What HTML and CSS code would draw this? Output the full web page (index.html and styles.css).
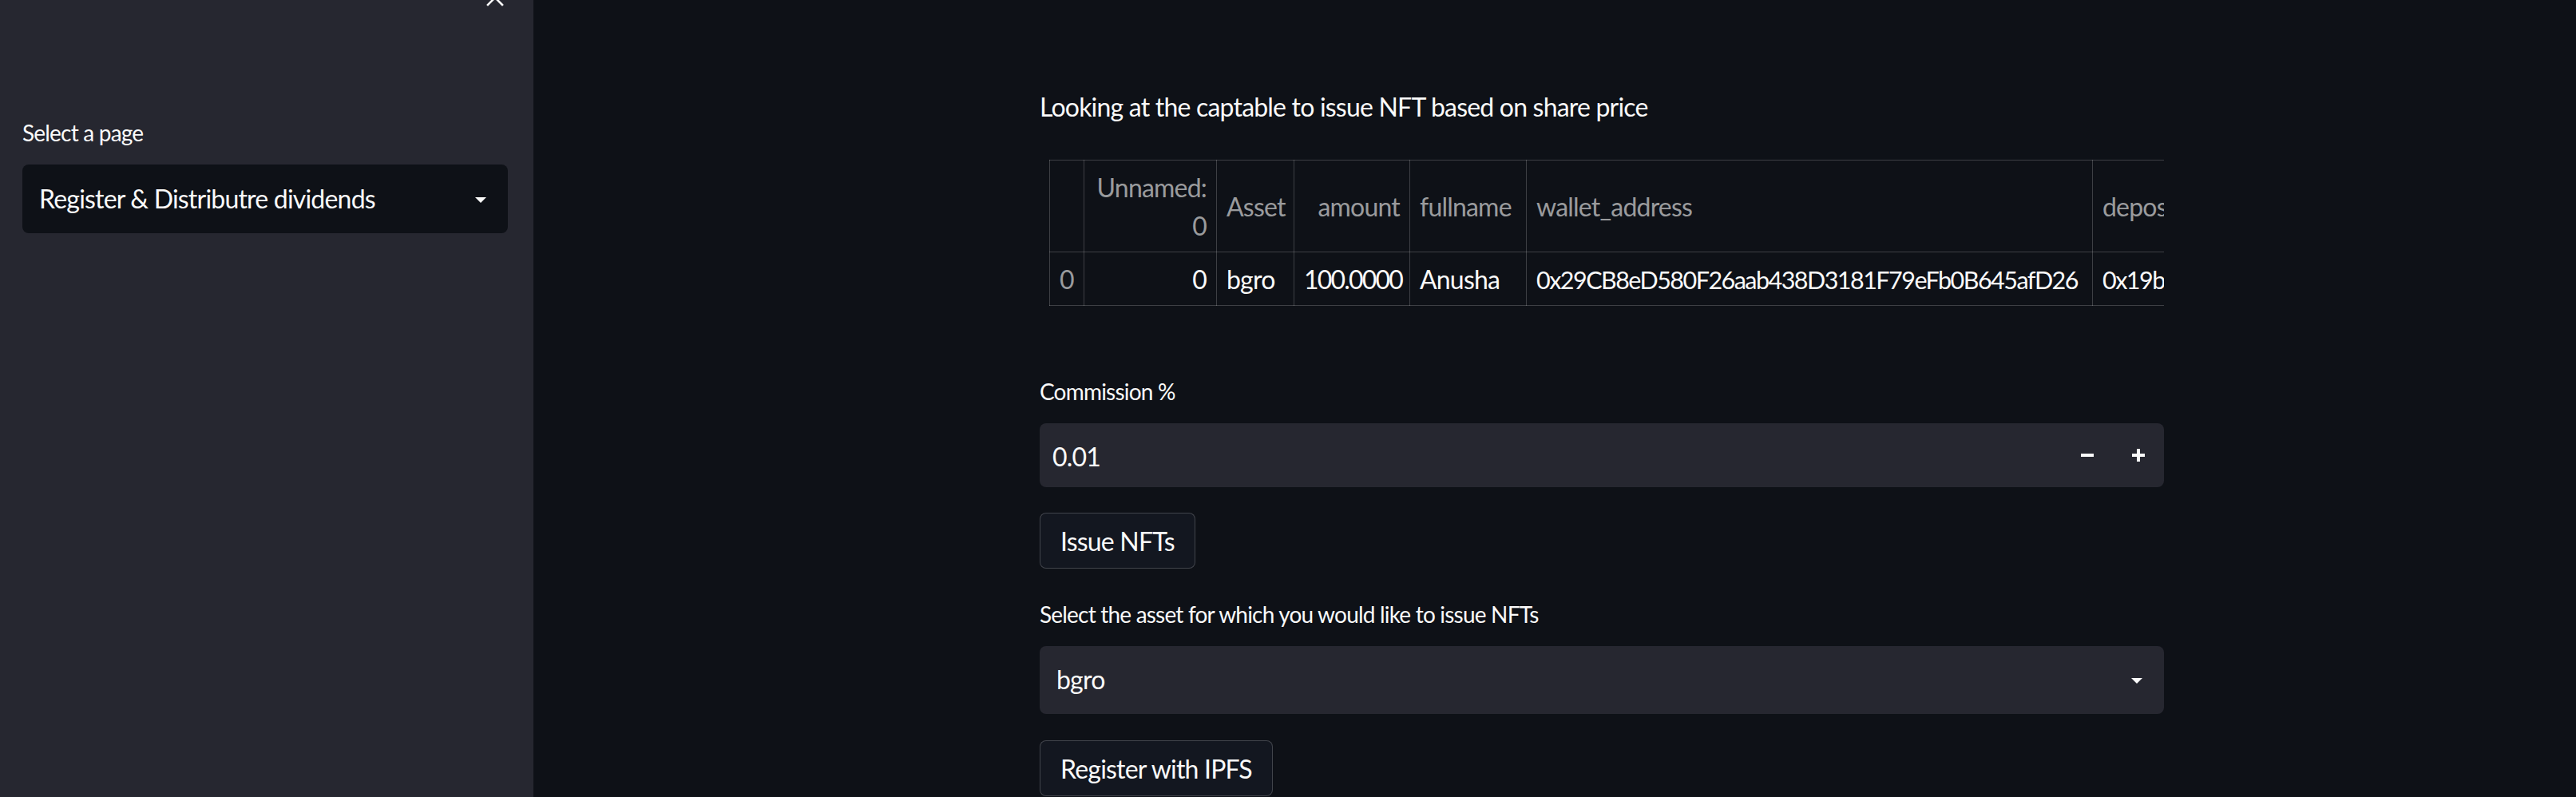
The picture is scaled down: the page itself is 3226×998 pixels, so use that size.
FILE: index.html
```html
<!DOCTYPE html>
<html lang="en">
<head>
<meta charset="utf-8">
<title>Register &amp; Distributre dividends</title>
<link rel="stylesheet" href="styles.css">
</head>
<body>
<div class="app">
  <aside class="sidebar">
    <div class="sidebar-header">
      <button class="close-btn" aria-label="Close sidebar">
        <svg width="24" height="24" viewBox="0 0 24 24"><path d="M3 3 L21 21 M21 3 L3 21" stroke="#fafafa" stroke-width="2.6" stroke-linecap="square" fill="none"/></svg>
      </button>
    </div>
    <div class="field sidebar-field">
      <div class="label">Select a page</div>
      <div class="select select-dark">
        <span class="select-value">Register &amp; Distributre dividends</span>
        <span class="caret"></span>
      </div>
    </div>
  </aside>
  <main class="main">
    <div class="block">
      <p class="heading">Looking at the captable to issue NFT based on share price</p>
      <div class="table-wrap">
        <table class="df">
          <colgroup>
            <col class="c-idx"><col class="c-unnamed"><col class="c-asset"><col class="c-amount"><col class="c-name"><col class="c-wallet"><col class="c-dep">
          </colgroup>
          <thead>
            <tr>
              <th></th>
              <th class="num">Unnamed:<br>0</th>
              <th>Asset</th>
              <th class="num">amount</th>
              <th>fullname</th>
              <th>wallet_address</th>
              <th>deposit_address</th>
            </tr>
          </thead>
          <tbody>
            <tr>
              <th class="idx">0</th>
              <td class="num">0</td>
              <td>bgro</td>
              <td class="num tight">100.0000</td>
              <td>Anusha</td>
              <td class="addr">0x29CB8eD580F26aab438D3181F79eFb0B645afD26</td>
              <td class="addr">0x19b4C2d7aE58F1b0a3C6e2D7F41A9c05bE3dA81F</td>
            </tr>
          </tbody>
        </table>
      </div>

      <div class="field field-commission">
        <div class="label">Commission %</div>
        <div class="number-input">
          <span class="number-value">0.01</span>
          <div class="steps">
            <button class="step" aria-label="Decrement"><svg width="16" height="16" viewBox="0 0 16 16"><rect x="0" y="6" width="16" height="4" fill="#fafafa"/></svg></button>
            <button class="step" aria-label="Increment"><svg width="16" height="16" viewBox="0 0 16 16"><rect x="0" y="6" width="16" height="4" fill="#fafafa"/><rect x="6" y="0" width="4" height="16" fill="#fafafa"/></svg></button>
          </div>
        </div>
      </div>

      <button class="btn btn-first">Issue NFTs</button>

      <div class="field field-asset">
        <div class="label">Select the asset for which you would like to issue NFTs</div>
        <div class="select">
          <span class="select-value">bgro</span>
          <span class="caret"></span>
        </div>
      </div>

      <button class="btn btn-second">Register with IPFS</button>
    </div>
  </main>
</div>
</body>
</html>
```
FILE: styles.css
```css
* { box-sizing: border-box; }
html, body {
  margin: 0;
  padding: 0;
  height: 100%;
  overflow: hidden;
}
body {
  background: #0e1117;
  color: #fafafa;
  font-family: "Lato", "Noto Sans", "Liberation Sans", sans-serif;
  font-size: 32px;
  letter-spacing: -0.025em;
}
.app {
  display: flex;
  height: 998px;
}
.sidebar {
  width: 668px;
  flex: 0 0 668px;
  background: #262730;
  padding: 0 32px 0 28px;
  display: flex;
  flex-direction: column;
}
.sidebar-header {
  display: flex;
  justify-content: flex-end;
  margin-top: -15px;
  padding-right: 4px;
  height: 24px;
}
.close-btn {
  background: none;
  border: 0;
  padding: 0;
  width: 24px;
  height: 24px;
  display: block;
}
.close-btn svg { display: block; }
.sidebar-field { margin-top: 133px; }

.label {
  font-size: 28px;
  height: 48px;
  display: flex;
  align-items: center;
  margin-bottom: 16px;
  color: #fafafa;
}
.select {
  height: 85px;
  background: #262730;
  border-radius: 8px;
  display: flex;
  align-items: center;
  justify-content: space-between;
  padding: 0 27px 0 21px;
}
.select-dark { background: #0e1117; height: 86px; }
.select-value { font-size: 32px; padding-bottom: 2px; }
.caret {
  width: 0;
  height: 0;
  border-left: 7px solid transparent;
  border-right: 7px solid transparent;
  border-top: 7px solid #fafafa;
  margin-top: 2px;
}

.main {
  flex: 1;
  padding: 108px 0 0 634px;
}
.block {
  width: 1408px;
  display: flex;
  flex-direction: column;
  align-items: flex-start;
}
.heading {
  margin: 0;
  line-height: 51px;
  height: 51px;
}
.table-wrap {
  margin-top: 41px;
  width: 1408px;
  padding-left: 12px;
  overflow: hidden;
}
.df {
  border-collapse: collapse;
  table-layout: fixed;
  width: 2100px;
  font-size: 32px;
}
.c-idx { width: 43px; }
.c-unnamed { width: 166px; }
.c-asset { width: 97px; }
.c-amount { width: 145px; }
.c-name { width: 146px; }
.c-wallet { width: 709px; }
.c-dep { width: 794px; }
.df th, .df td {
  border: 1px solid rgba(250, 250, 250, 0.2);
  padding: 10px 12px 8px;
  line-height: 48px;
  text-align: left;
  vertical-align: middle;
  font-weight: 400;
  white-space: nowrap;
  overflow: hidden;
}
.df td.tight { letter-spacing: -0.056em; }
.df td.addr { font-size: 30.5px; letter-spacing: -0.05em; }
.df thead th { color: rgba(250, 250, 250, 0.6); }
.df th.num, .df td.num { text-align: right; }
.df tbody th.idx { color: rgba(250, 250, 250, 0.6); }
.df tbody td { color: #fafafa; }

.field-commission { margin-top: 83px; width: 100%; }
.number-input {
  height: 80px;
  background: #262730;
  border-radius: 8px;
  display: flex;
  align-items: center;
  justify-content: space-between;
  padding-left: 16px;
}
.number-value { font-size: 32px; padding-top: 2px; }
.steps { display: flex; height: 100%; }
.step {
  width: 64px;
  height: 100%;
  background: none;
  border: 0;
  padding: 0;
  display: flex;
  align-items: center;
  justify-content: center;
}
.step svg { display: block; }

.btn {
  font-family: inherit;
  font-size: 32px;
  letter-spacing: -0.025em;
  color: #fafafa;
  background: rgb(19, 23, 32);
  border: 1px solid rgba(250, 250, 250, 0.2);
  border-radius: 8px;
  height: 70px;
  padding: 2px 25px 0;
  line-height: 52px;
}
.btn-first { margin-top: 32px; }
.field-asset { margin-top: 33px; width: 100%; }
.btn-second { margin-top: 33px; }
```
